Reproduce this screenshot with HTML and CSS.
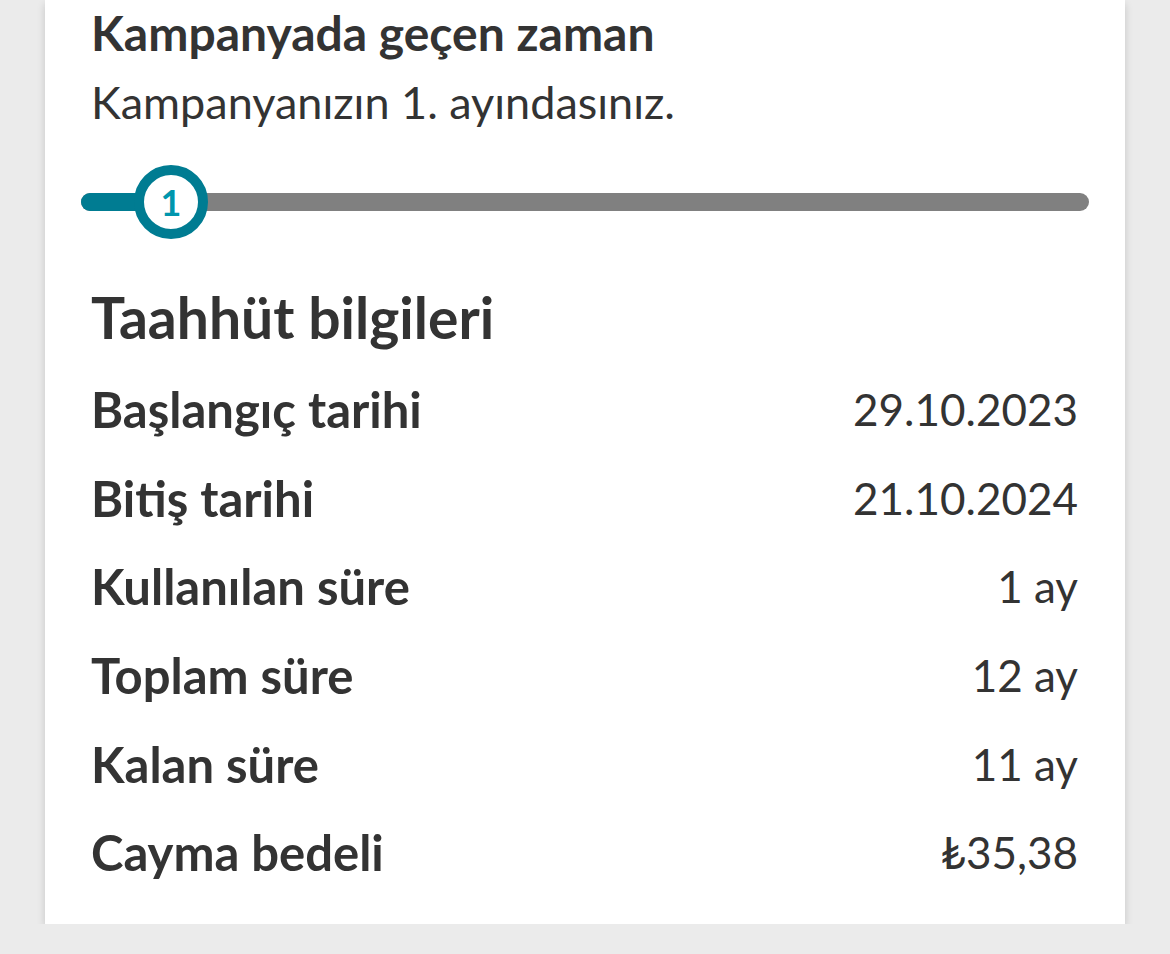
FILE: index.html
```html
<!DOCTYPE html>
<html>
<head>
	<title>Taahhüt bilgileri</title>
	<link rel="stylesheet" href="styles.css">
</head>
<body>
	<div class="card">
		<div class="title">Kampanyada geçen zaman</div>
		<div class="subtitle">Kampanyanızın 1. ayındasınız.</div>
		<div class="progress">
			<div class="track">
				<div class="fill"></div>
			</div>
			<div class="step">1</div>
		</div>
		<div class="heading">Taahhüt bilgileri</div>
		<div class="rows">
			<div class="row"><span class="label">Başlangıç tarihi</span><span class="value">29.10.2023</span></div>
			<div class="row"><span class="label">Bitiş tarihi</span><span class="value">21.10.2024</span></div>
			<div class="row"><span class="label">Kullanılan süre</span><span class="value">1 ay</span></div>
			<div class="row"><span class="label">Toplam süre</span><span class="value">12 ay</span></div>
			<div class="row"><span class="label">Kalan süre</span><span class="value">11 ay</span></div>
			<div class="row"><span class="label">Cayma bedeli</span><span class="value">₺35,38</span></div>
		</div>
	</div>
</body>
</html>
```

FILE: styles.css
```css
body {
	margin: 0;
	background-color: #ebebeb;
	font-family: 'Lato', 'Open Sans', sans-serif;
	color: #333;
}
.card {
	width: 1080px;
	margin: 0 45px;
	box-sizing: border-box;
	padding: 0 47px 27px 46px;
	background-color: #fff;
	box-shadow: 0 4px 8px rgba(0, 0, 0, 0.16);
}
.title {
	font-size: 48px;
	font-weight: bold;
	line-height: 66px;
}
.subtitle {
	font-size: 45px;
	line-height: 72px;
}
.progress {
	position: relative;
	height: 90px;
	margin: 19px -11px 0 -10px;
}
.track {
	position: absolute;
	left: 0;
	right: 0;
	top: 36px;
	height: 18px;
	border-radius: 9px;
	background-color: #808080;
	overflow: hidden;
}
.fill {
	width: 90px;
	height: 100%;
	background-color: #007c92;
}
.step {
	position: absolute;
	left: 53px;
	top: 8px;
	width: 54px;
	height: 54px;
	border: 10px solid #007c92;
	border-radius: 50%;
	background-color: #fff;
	color: #0096ad;
	font-size: 36px;
	font-weight: bold;
	line-height: 54px;
	text-align: center;
}
.heading {
	font-size: 57px;
	font-weight: bold;
	line-height: 96px;
	margin-top: 22px;
}
.rows {
	display: flex;
	flex-direction: column;
}
.row {
	display: flex;
	justify-content: space-between;
	align-items: center;
	height: 88.6px;
}
.label {
	font-size: 49px;
	font-weight: bold;
}
.value {
	font-size: 44px;
}
```
